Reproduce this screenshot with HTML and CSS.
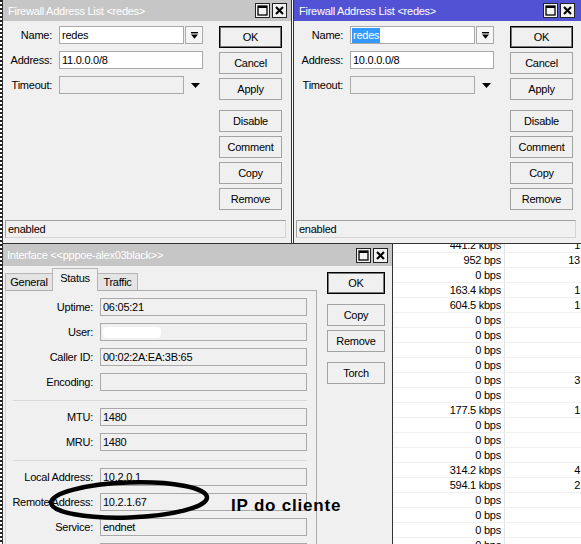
FILE: index.html
```html
<!DOCTYPE html>
<html>
<head>
<meta charset="utf-8">
<title>WinBox</title>
<link rel="stylesheet" href="styles.css">
</head>
<body>
<div class="desk">
  <div class="edge"></div>

  <div class="list">
    <div class="row"><div class="c1">441.2 kbps</div><div class="c2">1</div></div>
    <div class="row"><div class="c1">952 bps</div><div class="c2">13</div></div>
    <div class="row"><div class="c1">0 bps</div><div class="c2"></div></div>
    <div class="row"><div class="c1">163.4 kbps</div><div class="c2">1</div></div>
    <div class="row"><div class="c1">604.5 kbps</div><div class="c2">1</div></div>
    <div class="row"><div class="c1">0 bps</div><div class="c2"></div></div>
    <div class="row"><div class="c1">0 bps</div><div class="c2"></div></div>
    <div class="row"><div class="c1">0 bps</div><div class="c2"></div></div>
    <div class="row"><div class="c1">0 bps</div><div class="c2"></div></div>
    <div class="row"><div class="c1">0 bps</div><div class="c2">3</div></div>
    <div class="row"><div class="c1">0 bps</div><div class="c2"></div></div>
    <div class="row"><div class="c1">177.5 kbps</div><div class="c2">1</div></div>
    <div class="row"><div class="c1">0 bps</div><div class="c2"></div></div>
    <div class="row"><div class="c1">0 bps</div><div class="c2"></div></div>
    <div class="row"><div class="c1">0 bps</div><div class="c2"></div></div>
    <div class="row"><div class="c1">314.2 kbps</div><div class="c2">4</div></div>
    <div class="row"><div class="c1">594.1 kbps</div><div class="c2">2</div></div>
    <div class="row"><div class="c1">0 bps</div><div class="c2"></div></div>
    <div class="row"><div class="c1">0 bps</div><div class="c2"></div></div>
    <div class="row"><div class="c1">0 bps</div><div class="c2"></div></div>
    <div class="row"><div class="c1">0 bps</div><div class="c2"></div></div>
  </div>

  <!-- Window 1 (inactive) -->
  <section class="win w1">
    <header class="title">
      <span class="ttl">Firewall Address List &lt;redes&gt;</span>
      <span class="tb"><svg width="11" height="11" viewBox="0 0 11 11"><rect x="1" y="1" width="9" height="9" fill="none" stroke="#000" stroke-width="1.3"/><rect x="1" y="1" width="9" height="2" fill="#000"/></svg></span>
      <span class="tb"><svg width="11" height="11" viewBox="0 0 11 11"><path d="M2 2L9 9M9 2L2 9" stroke="#000" stroke-width="2.1"/></svg></span>
    </header>
    <div class="fbody">
      <div class="form">
        <span class="lbl">Name:</span>
        <div class="combo">
          <div class="inp name">redes</div>
          <div class="dd"><svg width="7" height="7" viewBox="0 0 7 7"><rect x="0" y="0" width="7" height="1.4"/><path d="M0 2.6H7L3.5 6.8Z"/></svg></div>
        </div>
        <span class="lbl">Address:</span>
        <div class="inp addr">11.0.0.0/8</div>
        <span class="lbl">Timeout:</span>
        <div class="combo">
          <div class="inp ro name"></div>
          <div class="arrow"><svg width="9" height="5" viewBox="0 0 9 5"><path d="M0 0H9L4.5 5Z"/></svg></div>
        </div>
      </div>
      <div class="btns">
        <div class="btn def">OK</div>
        <div class="btn">Cancel</div>
        <div class="btn">Apply</div>
        <div class="btn sep">Disable</div>
        <div class="btn">Comment</div>
        <div class="btn">Copy</div>
        <div class="btn">Remove</div>
      </div>
    </div>
    <div class="status">enabled</div>
  </section>

  <!-- Window 2 (active) -->
  <section class="win w2">
    <header class="title active">
      <span class="ttl">Firewall Address List &lt;redes&gt;</span>
      <span class="tb"><svg width="11" height="11" viewBox="0 0 11 11"><rect x="1" y="1" width="9" height="9" fill="none" stroke="#000" stroke-width="1.3"/><rect x="1" y="1" width="9" height="2" fill="#000"/></svg></span>
      <span class="tb"><svg width="11" height="11" viewBox="0 0 11 11"><path d="M2 2L9 9M9 2L2 9" stroke="#000" stroke-width="2.1"/></svg></span>
    </header>
    <div class="fbody">
      <div class="form">
        <span class="lbl">Name:</span>
        <div class="combo">
          <div class="inp name"><span class="sel">redes</span></div>
          <div class="dd"><svg width="7" height="7" viewBox="0 0 7 7"><rect x="0" y="0" width="7" height="1.4"/><path d="M0 2.6H7L3.5 6.8Z"/></svg></div>
        </div>
        <span class="lbl">Address:</span>
        <div class="inp addr">10.0.0.0/8</div>
        <span class="lbl">Timeout:</span>
        <div class="combo">
          <div class="inp ro name"></div>
          <div class="arrow"><svg width="9" height="5" viewBox="0 0 9 5"><path d="M0 0H9L4.5 5Z"/></svg></div>
        </div>
      </div>
      <div class="btns">
        <div class="btn def">OK</div>
        <div class="btn">Cancel</div>
        <div class="btn">Apply</div>
        <div class="btn sep">Disable</div>
        <div class="btn">Comment</div>
        <div class="btn">Copy</div>
        <div class="btn">Remove</div>
      </div>
    </div>
    <div class="status">enabled</div>
  </section>

  <!-- Window 3 (interface) -->
  <section class="win w3">
    <header class="title">
      <span class="ttl">Interface &lt;&lt;pppoe-alex03black&gt;&gt;</span>
      <span class="tb"><svg width="11" height="11" viewBox="0 0 11 11"><rect x="1" y="1" width="9" height="9" fill="none" stroke="#000" stroke-width="1.3"/><rect x="1" y="1" width="9" height="2" fill="#000"/></svg></span>
      <span class="tb"><svg width="11" height="11" viewBox="0 0 11 11"><path d="M2 2L9 9M9 2L2 9" stroke="#000" stroke-width="2.1"/></svg></span>
    </header>
    <div class="ibody">
      <div class="tabpane">
        <div class="tabs">
          <div class="tab t-gen">General</div>
          <div class="tab t-sta on">Status</div>
          <div class="tab t-tra">Traffic</div>
        </div>
        <div class="panel">
          <span class="lbl">Uptime:</span><div class="inp ro">06:05:21</div>
          <span class="lbl">User:</span><div class="inp ro"><span class="blot"></span></div>
          <span class="lbl">Caller ID:</span><div class="inp ro">00:02:2A:EA:3B:65</div>
          <span class="lbl">Encoding:</span><div class="inp ro"></div>
          <div class="hr"></div>
          <span class="lbl">MTU:</span><div class="inp ro">1480</div>
          <span class="lbl">MRU:</span><div class="inp ro">1480</div>
          <div class="hr"></div>
          <span class="lbl">Local Address:</span><div class="inp ro">10.2.0.1</div>
          <span class="lbl">Remote Address:</span><div class="inp ro">10.2.1.67</div>
          <span class="lbl">Service:</span><div class="inp ro">endnet</div>
          <span class="lbl"></span><div class="inp ro"></div>
        </div>
      </div>
      <div class="ibtns">
        <div class="btn def">OK</div>
        <div class="btn sep">Copy</div>
        <div class="btn">Remove</div>
        <div class="btn sep">Torch</div>
      </div>
    </div>
  </section>

  <svg class="mark" width="581" height="544" viewBox="0 0 581 544">
    <ellipse cx="129" cy="500" rx="78" ry="17.5" transform="rotate(-2 129 500)" fill="none" stroke="#000" stroke-width="4.5"/>
  </svg>
  <div class="note">IP do cliente</div>
</div>
</body>
</html>
```

FILE: styles.css
```css
html, body {
  margin: 0;
  padding: 0;
}

body {
  width: 581px;
  height: 544px;
  overflow: hidden;
  background: #ffffff;
  font-family: "Liberation Sans", Arial, sans-serif;
  font-size: 11px;
  letter-spacing: -0.25px;
  color: #000;
}

.desk {
  position: relative;
  width: 581px;
  height: 544px;
  overflow: hidden;
}

.edge {
  position: absolute;
  left: 0;
  top: 0;
  width: 2px;
  height: 544px;
  background: repeating-linear-gradient(to bottom, #222 0 2px, #fff 2px 4px);
}

/* background list */
.list {
  position: absolute;
  left: 393px;
  top: 238px;
  width: 188px;
  background: #fff;
}

.row {
  display: flex;
  height: 15px;
  box-sizing: border-box;
  border-bottom: 1px solid #f0f0f0;
  line-height: 14px;
}

.c1 {
  width: 112px;
  flex: none;
  box-sizing: border-box;
  padding-right: 3px;
  text-align: right;
  border-right: 1px solid #e3e3e3;
  white-space: nowrap;
}

.c2 {
  width: 75px;
  flex: none;
  box-sizing: border-box;
  text-align: right;
  white-space: nowrap;
}

/* windows */
.win {
  position: absolute;
  box-sizing: border-box;
  background: #f0f0f0;
  border: 1px solid #333;
  display: flex;
  flex-direction: column;
}

.w1 { left: 2px; top: -1px; width: 290px; height: 245px; }
.w2 { left: 293px; top: -1px; width: 289px; height: 245px; }
.w3 { left: 2px; top: 243px; width: 391px; height: 310px; }

.title {
  display: flex;
  align-items: center;
  flex: none;
  height: 21px;
  padding: 0 4px 0 5px;
  background: #c6c6c6;
  color: #fff;
}

.title.active { background: #5252d4; }
.w2 .title { padding-right: 6px; }
.w3 .title { height: 22px; padding-left: 4px; }

.ttl {
  flex: 1;
  white-space: nowrap;
}

.tb {
  width: 15px;
  height: 15px;
  box-sizing: border-box;
  border: 1px solid #222;
  background: #f2f2f2;
  margin-left: 2px;
  display: flex;
  align-items: center;
  justify-content: center;
}

.fbody {
  display: flex;
  flex: 1;
  padding-top: 5px;
}

.form {
  display: grid;
  grid-template-columns: 49px auto;
  column-gap: 7px;
  row-gap: 7px;
  align-content: start;
  align-items: center;
}

.lbl {
  text-align: right;
  white-space: nowrap;
}

.combo {
  display: flex;
  align-items: center;
}

.inp {
  box-sizing: border-box;
  height: 18px;
  border: 1px solid #a9a9a9;
  background: #fff;
  padding: 0 2px;
  line-height: 16px;
  white-space: nowrap;
  overflow: hidden;
}

.inp.ro { background: #f0f0f0; }

.name { width: 125px; }
.addr { width: 144px; }

.sel {
  display: inline-block;
  background: #3399ff;
  color: #fff;
  line-height: 15px;
  padding: 0 1px;
  margin-left: -1px;
}

.dd {
  width: 18px;
  height: 18px;
  box-sizing: border-box;
  border: 1px solid #a9a9a9;
  background: #f5f5f5;
  margin-left: 1px;
  display: flex;
  align-items: center;
  justify-content: center;
}

.arrow {
  margin-left: 7px;
  display: flex;
}

.btns {
  display: flex;
  flex-direction: column;
  gap: 4px;
  width: 63px;
  margin-left: 16px;
}

.btn {
  box-sizing: border-box;
  height: 22px;
  border: 1px solid #a3a3a3;
  background: #f0f0f0;
  display: flex;
  align-items: center;
  justify-content: center;
  white-space: nowrap;
}

.btn.def {
  border-color: #000;
  box-shadow: inset 0 0 0 1px #777;
}

.btn.sep { margin-top: 6px; }

.status {
  flex: none;
  height: 18px;
  box-sizing: border-box;
  margin: 0 5px 5px 2px;
  border: 1px solid #d4d4d4;
  border-top-color: #a0a0a0;
  border-left-color: #a0a0a0;
  padding-left: 2px;
  line-height: 17px;
}

/* interface window */
.ibody {
  display: flex;
  flex: 1;
  min-height: 0;
  padding-top: 2px;
}

.tabpane {
  width: 312px;
  margin-left: 2px;
  display: flex;
  flex-direction: column;
}

.tabs {
  display: flex;
  align-items: flex-end;
  height: 22px;
  flex: none;
}

.tab {
  box-sizing: border-box;
  height: 17px;
  border: 1px solid #b5b5b5;
  border-bottom: none;
  background: #e4e4e4;
  display: flex;
  align-items: center;
  justify-content: center;
}

.t-gen { width: 48px; }
.t-sta { width: 46px; margin-left: -1px; }
.t-tra { width: 41px; margin-left: -1px; }

.tab.on {
  height: 23px;
  margin-bottom: -1px;
  background: #f0f0f0;
  position: relative;
  z-index: 1;
  padding-bottom: 4px;
}

.panel {
  flex: 1;
  border: 1px solid #adadad;
  border-left-color: #d6d6d6;
  padding: 7px 9px 0 0;
  display: grid;
  grid-template-columns: 87px 207px;
  column-gap: 7px;
  row-gap: 7px;
  align-content: start;
  align-items: center;
}

.hr {
  grid-column: 1 / -1;
  height: 1px;
  margin: 2px 0 0 7px;
  background: #dadada;
}

.blot {
  display: inline-block;
  vertical-align: middle;
  width: 58px;
  height: 11px;
  margin-top: -2px;
  border-radius: 4px;
  background: #fff;
  filter: blur(0.6px);
}

.ibtns {
  display: flex;
  flex-direction: column;
  gap: 4px;
  width: 58px;
  margin-left: 10px;
  margin-top: 4px;
}

.ibtns .btn.sep { margin-top: 6px; }

/* annotation */
.mark {
  position: absolute;
  left: 0;
  top: 0;
  pointer-events: none;
}

.note {
  position: absolute;
  left: 231px;
  top: 497px;
  font-family: "Liberation Sans", Arial, sans-serif;
  font-weight: bold;
  font-size: 17px;
  line-height: 17px;
  letter-spacing: 0.8px;
  white-space: nowrap;
}
```
